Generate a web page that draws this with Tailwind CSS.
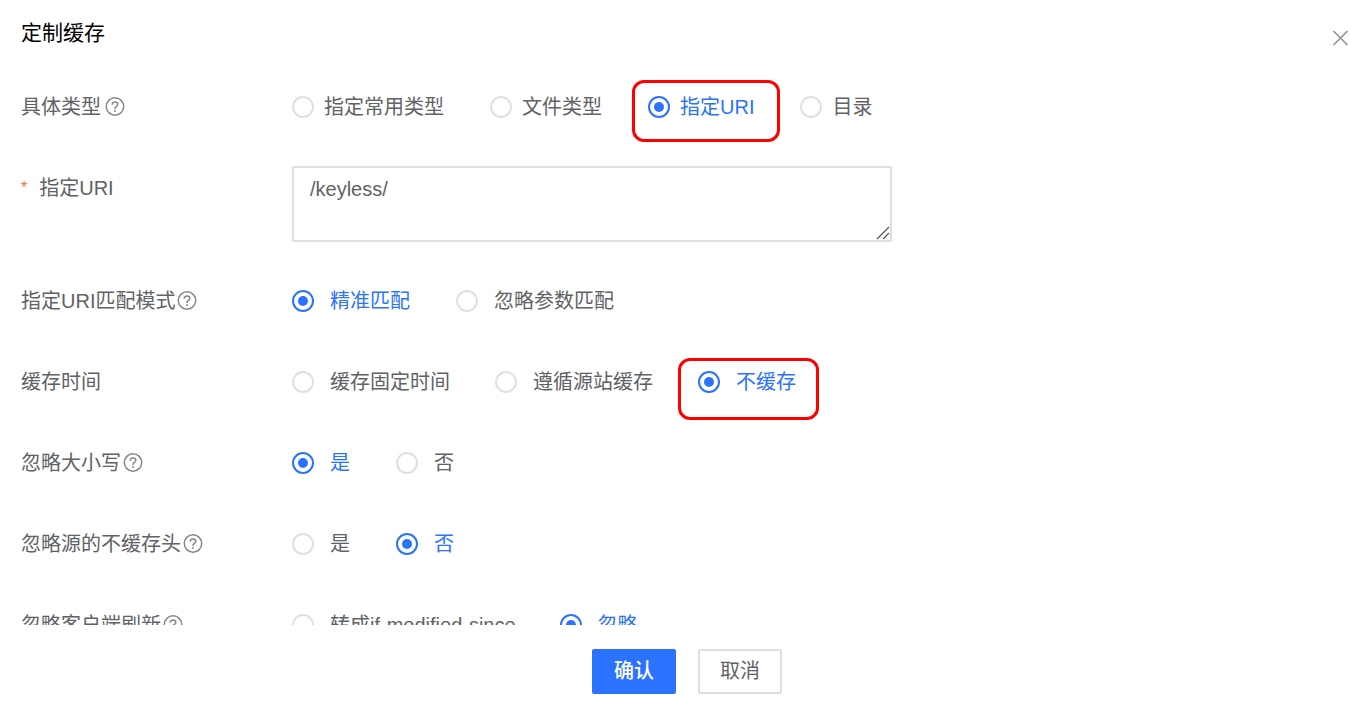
<!DOCTYPE html>
<html lang="zh-CN">
<head>
<meta charset="utf-8">
<meta name="viewport" content="width=device-width, initial-scale=1">
<title>定制缓存</title>
<script src="https://cdn.jsdelivr.net/npm/@tailwindcss/browser@4"></script>
</head>
<body class="bg-white font-['Liberation_Sans','Noto_Sans_CJK_SC',sans-serif] text-[20px] leading-6 text-[#606266]">
<svg class="hidden" aria-hidden="true">
  <symbol id="help" viewBox="0 0 20 20">
    <circle cx="10" cy="9.500" r="8.700" fill="none" stroke="currentColor" stroke-width="1.500"/>
    <path d="M7.200 7.700C7.200 5.900 8.400 4.900 10 4.900s2.800 1 2.800 2.500c0 1.900-2.800 2.100-2.800 4.100v.5" fill="none" stroke="currentColor" stroke-width="1.500"/>
    <circle cx="10" cy="14" r="1" fill="currentColor"/>
  </symbol>
</svg>
<div role="dialog" aria-labelledby="title" class="flex h-screen flex-col">
  <header class="flex h-[74px] shrink-0 items-start justify-between pl-[21px] pt-[21px]">
    <h1 id="title" class="text-[21px] leading-6 text-black">定制缓存</h1>
    <button type="button" aria-label="关闭" class="mt-[7px] text-[#909399]">
      <svg class="size-5" viewBox="0 0 20 20" fill="none" stroke="currentColor" stroke-width="1.700"><path d="M3.500 3l14 14M17.500 3l-14 14"/></svg>
    </button>
  </header>

  <form id="cache" class="flex min-h-0 flex-1 flex-col gap-9 overflow-y-auto pl-[21px] pt-2.5 [scrollbar-width:none]">
    <div role="radiogroup" aria-labelledby="l-type" class="flex shrink-0">
      <div id="l-type" class="flex h-[45px] w-[271px] shrink-0 items-center gap-1">具体类型<svg class="size-5 text-[#85878b]"><use href="#help"/></svg></div>
      <div class="flex gap-[46px]">
        <label class="flex items-center gap-2.5 has-checked:text-[#2b73ff]"><input type="radio" name="type" class="grid size-[22px] appearance-none place-items-center rounded-full border-2 border-[#e0e0e0] before:size-[10px] before:rounded-full checked:border-[#2b73ff] checked:before:bg-[#2b73ff]">指定常用类型</label>
        <label class="flex items-center gap-2.5 has-checked:text-[#2b73ff]"><input type="radio" name="type" class="grid size-[22px] appearance-none place-items-center rounded-full border-2 border-[#e0e0e0] before:size-[10px] before:rounded-full checked:border-[#2b73ff] checked:before:bg-[#2b73ff]">文件类型</label>
        <label class="relative flex items-center gap-2.5 has-checked:text-[#2b73ff]"><input type="radio" name="type" checked class="grid size-[22px] appearance-none place-items-center rounded-full border-2 border-[#e0e0e0] before:size-[10px] before:rounded-full checked:border-[#2b73ff] checked:before:bg-[#2b73ff]">指定URI<span class="pointer-events-none absolute -left-4 -top-1 h-[62px] w-[148px] rounded-xl border-3 border-[#ff0000]"></span></label>
        <label class="flex items-center gap-2.5 has-checked:text-[#2b73ff]"><input type="radio" name="type" class="grid size-[22px] appearance-none place-items-center rounded-full border-2 border-[#e0e0e0] before:size-[10px] before:rounded-full checked:border-[#2b73ff] checked:before:bg-[#2b73ff]">目录</label>
      </div>
    </div>

    <div class="flex shrink-0">
      <label for="uri" class="flex h-[45px] w-[271px] shrink-0 items-center gap-3"><span class="text-base text-[#ff6a4d]">*</span>指定URI</label>
      <div class="relative flex w-full max-w-[600px] pt-px">
        <textarea id="uri" class="h-[76px] w-full resize-none rounded-xs border-2 border-[#dfdfdf] px-4 py-[9px] outline-none">/keyless/</textarea>
        <svg class="absolute bottom-0.5 right-0.5 size-3.5" viewBox="0 0 14 14" fill="none" stroke="#555" stroke-width="1.200"><path d="M1 13L13 1M7 13l6-6"/></svg>
      </div>
    </div>

    <div role="radiogroup" aria-labelledby="l-match" class="flex shrink-0">
      <div id="l-match" class="flex h-[45px] w-[271px] shrink-0 items-center gap-0.5">指定URI匹配模式<svg class="size-5 text-[#85878b]"><use href="#help"/></svg></div>
      <div class="flex gap-[46px]">
        <label class="flex items-center gap-4 has-checked:text-[#2b73ff]"><input type="radio" name="match" checked class="grid size-[22px] appearance-none place-items-center rounded-full border-2 border-[#e0e0e0] before:size-[10px] before:rounded-full checked:border-[#2b73ff] checked:before:bg-[#2b73ff]">精准匹配</label>
        <label class="flex items-center gap-4 has-checked:text-[#2b73ff]"><input type="radio" name="match" class="grid size-[22px] appearance-none place-items-center rounded-full border-2 border-[#e0e0e0] before:size-[10px] before:rounded-full checked:border-[#2b73ff] checked:before:bg-[#2b73ff]">忽略参数匹配</label>
      </div>
    </div>

    <div role="radiogroup" aria-labelledby="l-time" class="flex shrink-0">
      <div id="l-time" class="flex h-[45px] w-[271px] shrink-0 items-center">缓存时间</div>
      <div class="flex gap-[45px]">
        <label class="flex items-center gap-4 has-checked:text-[#2b73ff]"><input type="radio" name="time" class="grid size-[22px] appearance-none place-items-center rounded-full border-2 border-[#e0e0e0] before:size-[10px] before:rounded-full checked:border-[#2b73ff] checked:before:bg-[#2b73ff]">缓存固定时间</label>
        <label class="flex items-center gap-4 has-checked:text-[#2b73ff]"><input type="radio" name="time" class="grid size-[22px] appearance-none place-items-center rounded-full border-2 border-[#e0e0e0] before:size-[10px] before:rounded-full checked:border-[#2b73ff] checked:before:bg-[#2b73ff]">遵循源站缓存</label>
        <label class="relative flex items-center gap-4 has-checked:text-[#2b73ff]"><input type="radio" name="time" checked class="grid size-[22px] appearance-none place-items-center rounded-full border-2 border-[#e0e0e0] before:size-[10px] before:rounded-full checked:border-[#2b73ff] checked:before:bg-[#2b73ff]">不缓存<span class="pointer-events-none absolute -left-5 -top-px h-[62px] w-[141px] rounded-xl border-3 border-[#ff0000]"></span></label>
      </div>
    </div>

    <div role="radiogroup" aria-labelledby="l-case" class="flex shrink-0">
      <div id="l-case" class="flex h-[45px] w-[271px] shrink-0 items-center gap-0.5">忽略大小写<svg class="size-5 text-[#85878b]"><use href="#help"/></svg></div>
      <div class="flex gap-[46px]">
        <label class="flex items-center gap-4 has-checked:text-[#2b73ff]"><input type="radio" name="case" checked class="grid size-[22px] appearance-none place-items-center rounded-full border-2 border-[#e0e0e0] before:size-[10px] before:rounded-full checked:border-[#2b73ff] checked:before:bg-[#2b73ff]">是</label>
        <label class="flex items-center gap-4 has-checked:text-[#2b73ff]"><input type="radio" name="case" class="grid size-[22px] appearance-none place-items-center rounded-full border-2 border-[#e0e0e0] before:size-[10px] before:rounded-full checked:border-[#2b73ff] checked:before:bg-[#2b73ff]">否</label>
      </div>
    </div>

    <div role="radiogroup" aria-labelledby="l-origin" class="flex shrink-0">
      <div id="l-origin" class="flex h-[45px] w-[271px] shrink-0 items-center gap-0.5">忽略源的不缓存头<svg class="size-5 text-[#85878b]"><use href="#help"/></svg></div>
      <div class="flex gap-[46px]">
        <label class="flex items-center gap-4 has-checked:text-[#2b73ff]"><input type="radio" name="origin" class="grid size-[22px] appearance-none place-items-center rounded-full border-2 border-[#e0e0e0] before:size-[10px] before:rounded-full checked:border-[#2b73ff] checked:before:bg-[#2b73ff]">是</label>
        <label class="flex items-center gap-4 has-checked:text-[#2b73ff]"><input type="radio" name="origin" checked class="grid size-[22px] appearance-none place-items-center rounded-full border-2 border-[#e0e0e0] before:size-[10px] before:rounded-full checked:border-[#2b73ff] checked:before:bg-[#2b73ff]">否</label>
      </div>
    </div>

    <div role="radiogroup" aria-labelledby="l-refresh" class="flex shrink-0">
      <div id="l-refresh" class="flex h-[45px] w-[271px] shrink-0 items-center gap-0.5">忽略客户端刷新<svg class="size-5 text-[#85878b]"><use href="#help"/></svg></div>
      <div class="flex gap-11">
        <label class="flex items-center gap-4 has-checked:text-[#2b73ff]"><input type="radio" name="refresh" class="grid size-[22px] appearance-none place-items-center rounded-full border-2 border-[#e0e0e0] before:size-[10px] before:rounded-full checked:border-[#2b73ff] checked:before:bg-[#2b73ff]">转成if-modified-since</label>
        <label class="flex items-center gap-4 has-checked:text-[#2b73ff]"><input type="radio" name="refresh" checked class="grid size-[22px] appearance-none place-items-center rounded-full border-2 border-[#e0e0e0] before:size-[10px] before:rounded-full checked:border-[#2b73ff] checked:before:bg-[#2b73ff]">忽略</label>
      </div>
    </div>
  </form>

  <footer class="flex shrink-0 justify-center gap-[22px] pb-5 pl-6 pt-6">
    <button type="submit" form="cache" class="h-[45px] w-[84px] rounded-xs bg-[#2b73ff] pb-0.5 font-medium text-white">确认</button>
    <button type="button" class="h-[45px] w-[84px] rounded-xs border-2 border-[#dfdfdf] bg-white pb-0.5">取消</button>
  </footer>
</div>
</body>
</html>
